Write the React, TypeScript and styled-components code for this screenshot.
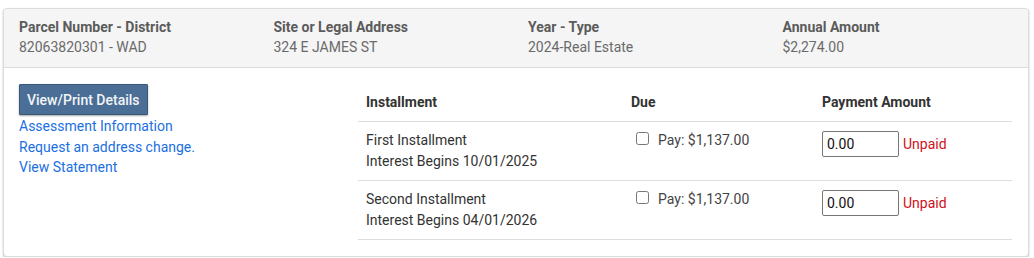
import * as React from 'react';
import styled, { createGlobalStyle } from 'styled-components';

const GlobalStyle = createGlobalStyle`
	body {
		margin: 0;
		background: #fff;
		font-family: Roboto, 'Liberation Sans', sans-serif;
		font-size: 14px;
		color: #333;
	}
`;

const Page = styled.div`
	padding: 8px 5px 0 3px;
`;

const Card = styled.div`
	border: 1px solid #dcdcdc;
	border-radius: 4px;
	background: #fff;
	box-shadow: 0 1px 2px rgba(0, 0, 0, 0.25);
	overflow: hidden;
`;

const Header = styled.div`
	display: grid;
	grid-template-columns: repeat(4, 1fr);
	background: #f5f5f5;
	border-bottom: 1px solid #dcdcdc;
	padding: 8px 6px 10px 0;
`;

const HeaderCol = styled.div`
	padding: 0 15px;
	line-height: 20px;
`;

const Label = styled.div`
	font-weight: 700;
	color: #5b5b5b;
`;

const Value = styled.div`
	color: #6a6a6a;
`;

const Body = styled.div`
	display: flex;
	padding: 16px 16px 16px 15px;
`;

const Side = styled.div`
	flex: 0 0 339px;
	display: flex;
	flex-direction: column;
	align-items: flex-start;
`;

const Button = styled.button`
	font-family: Roboto, 'Liberation Sans', sans-serif;
	font-size: 14px;
	font-weight: 500;
	color: #f2f5f8;
	background: #4a6e95;
	border: 1px solid #38587a;
	border-radius: 1px;
	box-shadow: 0 1px 2px rgba(0, 0, 0, 0.35);
	height: 31px;
	padding: 0 7px;
	margin-bottom: 1px;
`;

const Link = styled.a`
	color: #1a6fe3;
	text-decoration: none;
	line-height: 20.5px;
	font-size: 14px;
`;

const Table = styled.table`
	flex: 1;
	border-collapse: collapse;
	table-layout: fixed;
`;

const Th = styled.th<{ w?: number }>`
	text-align: left;
	font-weight: 700;
	color: #333;
	padding: 8px;
	line-height: 21px;
	border-bottom: 1px solid #ddd;
	${p => (p.w ? `width: ${p.w}px;` : '')}
`;

const Td = styled.td`
	vertical-align: top;
	padding: 8px;
	line-height: 21px;
	color: #333;
	border-bottom: 1px solid #ddd;
`;

const DueWrap = styled.label`
	display: flex;
	align-items: center;
	color: #444;
`;

const Check = styled.input`
	width: 13px;
	height: 13px;
	margin: 0 9px 0 5px;
	position: relative;
	top: -2px;
`;

const PayWrap = styled.div`
	display: flex;
	align-items: center;
	padding-top: 1px;
`;

const AmountInput = styled.input`
	box-sizing: border-box;
	width: 77px;
	height: 26px;
	border: 1px solid #767676;
	border-radius: 2px;
	padding: 0 4px;
	font-family: Roboto, 'Liberation Sans', sans-serif;
	font-size: 14px;
	color: #111;
`;

const Status = styled.span`
	color: #d0101a;
	margin-left: 4px;
`;

const header = [
	{ label: 'Parcel Number - District', value: '82063820301 - WAD' },
	{ label: 'Site or Legal Address', value: '324 E JAMES ST' },
	{ label: 'Year - Type', value: '2024-Real Estate' },
	{ label: 'Annual Amount', value: '$2,274.00' },
];

const installments = [
	{ name: 'First Installment', interest: 'Interest Begins 10/01/2025', due: '$1,137.00' },
	{ name: 'Second Installment', interest: 'Interest Begins 04/01/2026', due: '$1,137.00' },
];

export default function App() {
	return (
		<Page>
			<GlobalStyle />
			<Card>
				<Header>
					{header.map(h => (
						<HeaderCol key={h.label}>
							<Label>{h.label}</Label>
							<Value>{h.value}</Value>
						</HeaderCol>
					))}
				</Header>
				<Body>
					<Side>
						<Button>View/Print Details</Button>
						<Link href="#">Assessment Information</Link>
						<Link href="#">Request an address change.</Link>
						<Link href="#">View Statement</Link>
					</Side>
					<Table>
						<thead>
							<tr>
								<Th w={249}>Installment</Th>
								<Th w={175}>Due</Th>
								<Th>Payment Amount</Th>
							</tr>
						</thead>
						<tbody>
							{installments.map(i => (
								<tr key={i.name}>
									<Td>
										<div>{i.name}</div>
										<div>{i.interest}</div>
									</Td>
									<Td>
										<DueWrap>
											<Check type="checkbox" />
											Pay: {i.due}
										</DueWrap>
									</Td>
									<Td>
										<PayWrap>
											<AmountInput defaultValue="0.00" />
											<Status>Unpaid</Status>
										</PayWrap>
									</Td>
								</tr>
							))}
						</tbody>
					</Table>
				</Body>
			</Card>
		</Page>
	);
}
